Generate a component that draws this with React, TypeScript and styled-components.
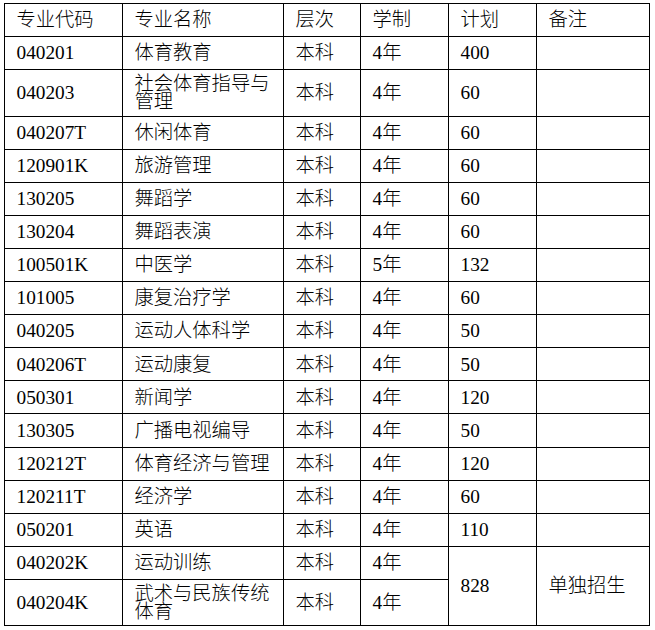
import React from 'react';
import styled, { createGlobalStyle } from 'styled-components';

const GlobalStyle = createGlobalStyle`
  html, body {
    margin: 0;
    padding: 0;
    background: #ffffff;
  }
`;

const Page = styled.div`
  padding: 3px 0 0 4px;
  font-family: "Liberation Serif", "Noto Sans CJK SC", serif;
  color: #000000;
`;

const Table = styled.table`
  border-collapse: collapse;
  table-layout: fixed;
  width: 645px;
  font-size: 19.3px;
  font-weight: 300;
`;

const Row = styled.tr<{ $tall?: boolean }>`
  height: ${props => (props.$tall ? '46.4px' : '33.1px')};
`;

const Cell = styled.td`
  border: 1px solid #000000;
  padding: 0 8px 0 11.5px;
  vertical-align: middle;
  line-height: 17.4px;
  white-space: normal;
  word-break: break-all;
`;

type Major = {
  code: string;
  name: string;
  level: string;
  years: string;
  plan?: string;
  tall?: boolean;
};

const majors: Major[] = [
  { code: '040201', name: '体育教育', level: '本科', years: '4年', plan: '400' },
  { code: '040203', name: '社会体育指导与管理', level: '本科', years: '4年', plan: '60', tall: true },
  { code: '040207T', name: '休闲体育', level: '本科', years: '4年', plan: '60' },
  { code: '120901K', name: '旅游管理', level: '本科', years: '4年', plan: '60' },
  { code: '130205', name: '舞蹈学', level: '本科', years: '4年', plan: '60' },
  { code: '130204', name: '舞蹈表演', level: '本科', years: '4年', plan: '60' },
  { code: '100501K', name: '中医学', level: '本科', years: '5年', plan: '132' },
  { code: '101005', name: '康复治疗学', level: '本科', years: '4年', plan: '60' },
  { code: '040205', name: '运动人体科学', level: '本科', years: '4年', plan: '50' },
  { code: '040206T', name: '运动康复', level: '本科', years: '4年', plan: '50' },
  { code: '050301', name: '新闻学', level: '本科', years: '4年', plan: '120' },
  { code: '130305', name: '广播电视编导', level: '本科', years: '4年', plan: '50' },
  { code: '120212T', name: '体育经济与管理', level: '本科', years: '4年', plan: '120' },
  { code: '120211T', name: '经济学', level: '本科', years: '4年', plan: '60' },
  { code: '050201', name: '英语', level: '本科', years: '4年', plan: '110' },
];

// 单独招生 rows share the plan and remark cells
const solo: Major[] = [
  { code: '040202K', name: '运动训练', level: '本科', years: '4年' },
  { code: '040204K', name: '武术与民族传统体育', level: '本科', years: '4年', tall: true },
];

const App: React.FC = () => {
  return (
    <Page>
      <GlobalStyle />
      <Table>
        <colgroup>
          <col style={{ width: 118 }} />
          <col style={{ width: 161 }} />
          <col style={{ width: 77 }} />
          <col style={{ width: 88 }} />
          <col style={{ width: 88 }} />
          <col style={{ width: 113 }} />
        </colgroup>
        <tbody>
          <Row>
            <Cell>专业代码</Cell>
            <Cell>专业名称</Cell>
            <Cell>层次</Cell>
            <Cell>学制</Cell>
            <Cell>计划</Cell>
            <Cell>备注</Cell>
          </Row>
          {majors.map(m => (
            <Row key={m.code} $tall={m.tall}>
              <Cell>{m.code}</Cell>
              <Cell>{m.name}</Cell>
              <Cell>{m.level}</Cell>
              <Cell>{m.years}</Cell>
              <Cell>{m.plan}</Cell>
              <Cell />
            </Row>
          ))}
          {solo.map((m, i) => (
            <Row key={m.code} $tall={m.tall}>
              <Cell>{m.code}</Cell>
              <Cell>{m.name}</Cell>
              <Cell>{m.level}</Cell>
              <Cell>{m.years}</Cell>
              {i === 0 && (
                <>
                  <Cell rowSpan={2}>828</Cell>
                  <Cell rowSpan={2}>单独招生</Cell>
                </>
              )}
            </Row>
          ))}
        </tbody>
      </Table>
    </Page>
  );
};

export default App;
